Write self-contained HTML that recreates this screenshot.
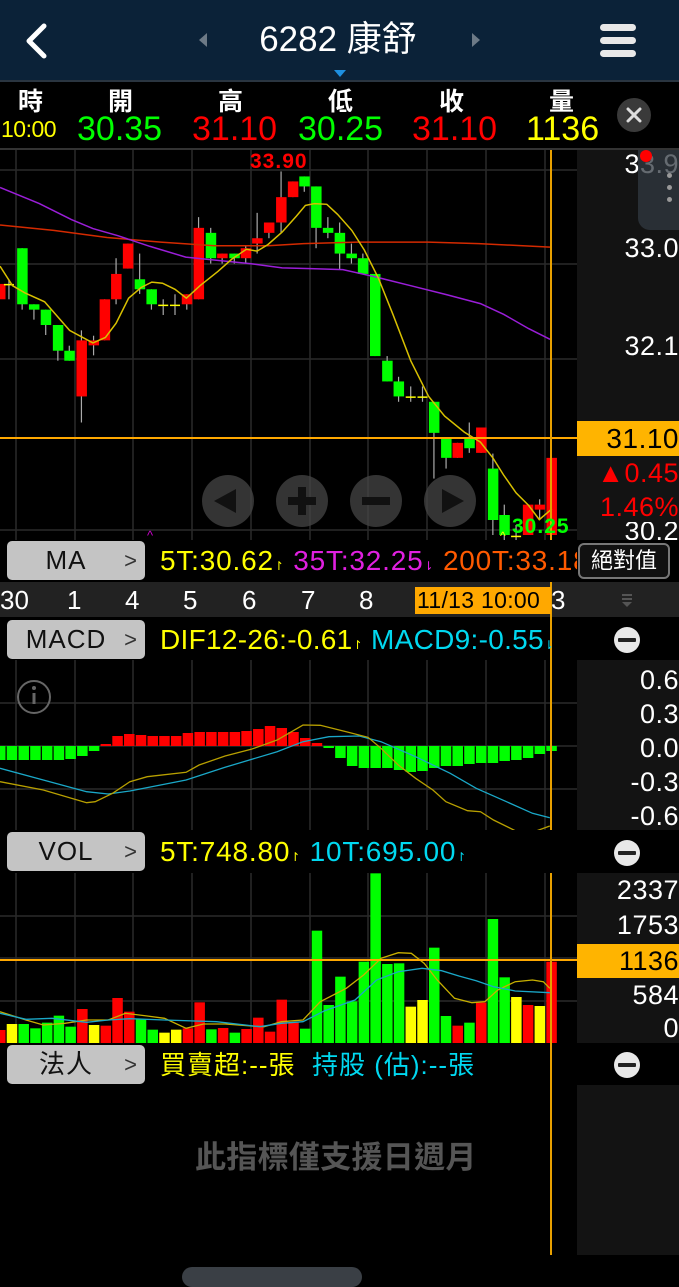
<!DOCTYPE html>
<html><head><meta charset="utf-8"><style>
*{margin:0;padding:0;box-sizing:border-box}
body{width:679px;height:1280px;background:#000;position:relative;overflow:hidden;font-family:"Liberation Sans","Noto Sans CJK TC",sans-serif;color:#fff}
.a{position:absolute;white-space:nowrap}
.btn{position:absolute;left:7px;width:138px;height:39px;background:#c4c4c4;border-radius:5px;color:#111;font-size:26px;line-height:39px}
.btn span{position:absolute;right:8px;top:0;color:#333;font-size:22px}
.btn b{font-weight:normal;position:absolute;left:0;width:118px;text-align:center;letter-spacing:1px}
.lbl{font-size:28px;line-height:30px;letter-spacing:0.8px}
.ax{font-size:27px;color:#fff;text-align:right;right:0px;letter-spacing:0.5px}
</style></head><body>
<div class="a" style="left:0;top:0;width:679px;height:80px;background:#0b2238"></div>
<svg class="a" style="left:0;top:0" width="679" height="80">
<path d="M44 26 L29 41 L44 56" stroke="#fff" stroke-width="5" fill="none" stroke-linecap="round" stroke-linejoin="round"/>
<path d="M207 33 L199 40 L207 47Z" fill="#6d7a86"/>
<path d="M472 33 L480 40 L472 47Z" fill="#6d7a86"/>
<rect x="600" y="24" width="36" height="7" rx="3.5" fill="#e8e8e8"/>
<rect x="600" y="37" width="36" height="7" rx="3.5" fill="#e8e8e8"/>
<rect x="600" y="50" width="36" height="7" rx="3.5" fill="#e8e8e8"/>
<path d="M334 70 L346 70 L340 77Z" fill="#1e90e0"/>
</svg>
<div class="a" style="left:218px;top:19px;width:240px;text-align:center;font-size:35px;line-height:42px">6282 康舒</div>
<div class="a" style="left:0;top:80px;width:679px;height:70px;border-top:2px solid #2a3540;border-bottom:2px solid #333"></div>
<div class="a" style="left:0;top:82px;width:679px;font-size:25px;font-weight:bold">
<span class="a" style="left:18px">時</span><span class="a" style="left:108px">開</span><span class="a" style="left:218px">高</span><span class="a" style="left:328px">低</span><span class="a" style="left:439px">收</span><span class="a" style="left:549px">量</span></div>
<div class="a" style="left:1px;top:116px;color:#ff0;font-size:23px;letter-spacing:-0.5px">10:00</div>
<div class="a" style="left:77px;top:110px;color:#0f0;font-size:34px">30.35</div>
<div class="a" style="left:192px;top:110px;color:#f00;font-size:34px">31.10</div>
<div class="a" style="left:298px;top:110px;color:#0f0;font-size:34px">30.25</div>
<div class="a" style="left:412px;top:110px;color:#f00;font-size:34px">31.10</div>
<div class="a" style="left:526px;top:110px;color:#ff0;font-size:34px">1136</div>
<svg class="a" style="left:616px;top:97px" width="36" height="36"><circle cx="18" cy="18" r="17" fill="#3a3a3a"/><path d="M12 12 L24 24 M24 12 L12 24" stroke="#ddd" stroke-width="3" stroke-linecap="round"/></svg>

<div class="a" style="left:577px;top:150px;width:102px;height:390px;background:#131313"></div>
<div class="a" style="left:577px;top:660px;width:102px;height:170px;background:#131313"></div>
<div class="a" style="left:577px;top:873px;width:102px;height:170px;background:#131313"></div>
<div class="a" style="left:577px;top:1085px;width:102px;height:170px;background:#131313"></div>
<div class="a" style="left:0;top:582px;width:679px;height:35px;background:#222"></div>

<svg id="ch" class="a" style="left:0;top:0" width="679" height="1280"></svg>

<div class="a ax" style="top:149px">33.9</div>
<div class="a" style="left:638px;top:150px;width:41px;height:80px;background:rgba(50,58,66,.75);border-radius:0 0 0 12px"></div>
<div class="a" style="left:640px;top:150px;width:12px;height:12px;border-radius:6px;background:#f00"></div>
<div class="a" style="left:667px;top:173px;width:5px;height:5px;border-radius:3px;background:#999"></div>
<div class="a" style="left:667px;top:185px;width:5px;height:5px;border-radius:3px;background:#999"></div>
<div class="a" style="left:667px;top:197px;width:5px;height:5px;border-radius:3px;background:#999"></div>
<div class="a ax" style="top:233px">33.0</div>
<div class="a ax" style="top:331px">32.1</div>
<div class="a" style="left:577px;top:421px;width:102px;height:35px;background:#ffb400;color:#000;font-size:28px;text-align:right;line-height:35px;letter-spacing:0.5px">31.10</div>
<div class="a" style="right:0px;top:458px;color:#f00;font-size:27px;letter-spacing:0.5px">▲0.45</div>
<div class="a" style="right:0px;top:492px;color:#f00;font-size:27px;letter-spacing:0.5px">1.46%</div>
<div class="a ax" style="top:522px;height:18px;overflow:hidden;line-height:18px">30.2</div>
<div class="a" style="left:250px;top:150px;color:#f00;font-size:21px;font-weight:bold;letter-spacing:1px">33.90</div>
<div class="a" style="left:512px;top:515px;color:#0f0;font-size:21px;font-weight:bold;letter-spacing:1px">30.25</div>

<div class="a" style="left:0;top:540px;width:679px;height:42px;background:#000"></div>
<div class="btn" style="top:541px"><b>MA</b><span>&gt;</span></div>
<div class="a lbl" style="left:160px;top:546px;width:417px;overflow:hidden"><span style="color:#ff0">5T:30.62<small style="font-size:12px">↾</small></span> <span style="color:#e020e0">35T:32.25<small style="font-size:12px">⇂</small></span> <span style="color:#ff5a00">200T:33.18</span></div>
<div class="a" style="left:578px;top:543px;width:92px;height:36px;border:2px solid #777;border-radius:6px;background:#111;font-size:22px;line-height:32px;text-align:center">絕對值</div>
<div class="a" style="left:415px;top:587px;width:136px;height:27px;background:#ffa800"></div>
<div class="a" style="left:0;top:582px;width:679px;font-size:26px;line-height:36px">
<span class="a" style="left:0">30</span><span class="a" style="left:67px">1</span><span class="a" style="left:125px">4</span><span class="a" style="left:183px">5</span><span class="a" style="left:242px">6</span><span class="a" style="left:301px">7</span><span class="a" style="left:359px">8</span><span class="a" style="left:417px;color:#000;font-size:23px;letter-spacing:0.3px">11/13 10:00</span><span class="a" style="left:551px">3</span></div>
<svg class="a" style="left:619px;top:592px" width="16" height="16"><rect x="3" y="2" width="10" height="2" fill="#555"/><rect x="3" y="6" width="10" height="2" fill="#555"/><path d="M3 10 L13 10 L8 15Z" fill="#555"/></svg>
<div class="btn" style="top:620px"><b>MACD</b><span>&gt;</span></div>
<div class="a lbl" style="left:160px;top:625px;width:417px;overflow:hidden;letter-spacing:0.3px"><span style="color:#ff0">DIF12-26:-0.61<small style="font-size:12px">↾</small></span> <span style="color:#00d8f0">MACD9:-0.55<small style="font-size:12px">⇂</small></span></div>
<div class="a ax" style="top:665px">0.6</div>
<div class="a ax" style="top:699px">0.3</div>
<div class="a ax" style="top:733px">0.0</div>
<div class="a ax" style="top:767px">-0.3</div>
<div class="a ax" style="top:801px">-0.6</div>
<div class="a" style="left:0;top:830px;width:577px;height:43px;background:#000"></div>
<div class="btn" style="top:832px"><b>VOL</b><span>&gt;</span></div>
<div class="a lbl" style="left:160px;top:837px"><span style="color:#ff0">5T:748.80<small style="font-size:12px">↾</small></span> <span style="color:#00d8f0">10T:695.00<small style="font-size:12px">↾</small></span></div>
<div class="a ax" style="top:875px">2337</div>
<div class="a ax" style="top:910px">1753</div>
<div class="a" style="left:577px;top:944px;width:102px;height:34px;background:#ffb400;color:#000;font-size:27px;text-align:right;line-height:34px;letter-spacing:0.5px">1136</div>
<div class="a ax" style="top:980px">584</div>
<div class="a ax" style="top:1013px">0</div>
<div class="btn" style="top:1045px"><b>法人</b><span>&gt;</span></div>
<div class="a lbl" style="left:160px;top:1050px;font-size:26px;letter-spacing:1px"><span style="color:#ff0">買賣超:--張</span>&nbsp; <span style="color:#00d8f0">持股 (估):--張</span></div>
<div class="a" style="left:195px;top:1132px;color:#555;font-size:31px;font-weight:bold;letter-spacing:0.3px">此指標僅支援日週月</div>
<div class="a" style="left:182px;top:1267px;width:180px;height:20px;border-radius:10px;background:#3a3f45"></div>

<script>
var s=document.getElementById('ch'),h='';
function L(x1,y1,x2,y2,c,w){h+='<line x1="'+x1+'" y1="'+y1+'" x2="'+x2+'" y2="'+y2+'" stroke="'+c+'" stroke-width="'+(w||1)+'"/>';}
function R(x,y,w,hh,c){h+='<rect x="'+x+'" y="'+y+'" width="'+w+'" height="'+hh+'" fill="'+c+'"/>';}
function P(pts,c,w,fx,fy,ox,oy){var a=[];for(var i=0;i<pts.length;i+=2)a.push((ox+pts[i]/fx).toFixed(1)+','+(oy+pts[i+1]/fy).toFixed(1));h+='<polyline points="'+a.join(' ')+'" fill="none" stroke="'+c+'" stroke-width="'+w+'"/>';}
var gx=[16,75,133,192,251,310,368,427,486,545];
[[150,540],[660,830],[873,1043]].forEach(function(r){gx.forEach(function(x){L(x,r[0],x,r[1],'#2a2a2a',1.5)});});
[170,264,359,530].forEach(function(y){L(0,y,577,y,'#2a2a2a',1.5)});
[703,746,789].forEach(function(y){L(0,y,577,y,'#2a2a2a',1.5)});
[916,958,1001].forEach(function(y){L(0,y,577,y,'#2a2a2a',1.5)});
var C=[[0,375,418,0,0,'r'],[25,377,377,362,418,'y'],[62,275,432,275,447,'g'],[95,432,447,432,475,'g'],[128,447,490,447,518,'g'],[162,490,562,490,590,'g'],[194,562,590,548,590,'g'],[228,533,690,505,763,'r'],[262,533,547,520,575,'r'],[293,418,533,418,533,'r'],[325,347,418,303,432,'r'],[358,262,332,262,332,'r'],[391,362,390,290,403,'g'],[424,390,432,390,447,'g'],[457,435,435,418,462,'y'],[490,435,435,404,462,'y'],[523,404,432,404,447,'r'],[556,218,418,188,418,'r'],[590,232,303,218,318,'g'],[622,290,303,290,318,'r'],[656,290,303,290,318,'g'],[688,275,303,270,318,'r'],[720,247,262,176,290,'r'],[753,203,232,203,247,'r'],[787,132,203,60,232,'r'],[820,88,132,88,132,'r'],[852,74,102,74,117,'g'],[885,102,218,102,275,'g'],[918,218,232,188,247,'g'],[951,232,290,203,333,'g'],[984,290,303,262,318,'g'],[1016,303,347,290,347,'g'],[1050,347,577,347,577,'g'],[1084,590,648,577,648,'g'],[1116,648,690,635,705,'g'],[1150,692,692,662,705,'y'],[1183,692,692,662,705,'y'],[1215,705,792,705,920,'g'],[1249,806,862,806,892,'g'],[1281,820,862,820,862,'r'],[1314,806,835,763,848,'g'],[1347,777,848,777,848,'r'],[1380,892,1036,850,1078,'g'],[1412,1022,1078,993,1092,'g'],[1445,1082,1082,1050,1092,'y'],[1478,993,1078,993,1078,'r'],[1511,993,1007,978,1036,'r'],[1544,862,1078,862,1078,'r']];
var col={r:'#f00',g:'#0f0',y:'#ff0'};
C.forEach(function(c){var x=c[0]/2.8,f=function(v){return 150+v/2.8};
 if(c[3])L(x,f(c[3]),x,f(c[4]),'#aaa',1.2);
 if(c[5]=='y')L(x-5,f(c[1]),x+5,f(c[1]),'#ff0',1.5);
 else R(x-5,f(c[1]),10.5,Math.max(2,f(c[2])-f(c[1])),col[c[5]]);});
P([0,210,150,225,300,245,450,258,600,268,750,268,850,262,1000,258,1200,258,1340,262,1540,272],'#d42a00',1.5,2.8,2.8,0,150);
P([0,105,110,150,200,195,260,220,330,240,420,270,520,300,620,310,700,318,790,330,870,332,960,335,1050,355,1150,380,1250,405,1345,430,1410,460,1480,500,1540,530],'#9a1ed8',1.5,2.8,2.8,0,150);
P([0,325,35,380,70,400,125,425,195,505,260,540,295,525,325,485,360,415,395,385,425,370,455,373,490,390,522,415,560,380,610,340,650,305,690,278,720,283,750,265,790,230,830,185,855,155,880,150,915,152,945,180,985,225,1020,280,1060,360,1100,460,1150,590,1200,690,1245,745,1300,790,1345,818,1380,862,1410,910,1445,960,1480,995,1510,1035,1545,1005],'#d8c000',1.5,2.8,2.8,0,150);
[228,302,376,450].forEach(function(x,i){h+='<circle cx="'+x+'" cy="501" r="26" fill="rgba(70,70,70,.75)"/>';});
h+='<path d="M214 501 L236 489 L236 513Z" fill="#111"/><rect x="288" y="497" width="28" height="8" fill="#111"/><rect x="298" y="487" width="8" height="28" fill="#111"/><rect x="362" y="497" width="28" height="8" fill="#111"/><path d="M464 501 L442 489 L442 513Z" fill="#111"/>';
h+='<text x="147" y="540" fill="#c0c" font-size="13">^</text><text x="500" y="540" fill="#ff0" font-size="12">^</text>';
var M=[-14,-14,-14,-14,-14,-14,-13,-10,-5,2,10,12,11,10,10,10,13,14,14,14,14,15,17,20,18,14,8,3,-2,-12,-20,-22,-22,-22,-24,-26,-25,-22,-20,-20,-18,-17,-17,-15,-14,-12,-8,-5];
M.forEach(function(v,i){var x=i*11.73-5;if(v>0)R(x,746-v,10.5,v,'#f00');else R(x,746,10.5,-v,'#0f0');});
P([0,325,100,360,200,395,250,402,300,393,430,360,520,322,640,275,700,245,760,230,830,228,880,245,960,290,1040,340,1100,385,1170,425,1230,460,1270,473],'#1aa8c8',1.3,2.31,3,0,660);
P([0,365,100,390,200,428,220,425,260,400,300,365,340,350,430,337,460,315,520,288,580,268,640,240,700,195,740,196,800,215,850,232,880,265,920,315,960,355,1000,390,1030,425,1080,452,1110,455,1140,480,1190,512,1240,512,1270,498],'#b8a000',1.3,2.31,3,0,660);
h+='<circle cx="34" cy="697" r="16" fill="none" stroke="#666" stroke-width="2"/><rect x="32.5" y="693" width="3" height="11" fill="#666"/><circle cx="34" cy="688" r="2" fill="#666"/>';
var V=[[510,'r'],[492,'y'],[492,'g'],[505,'g'],[488,'g'],[467,'g'],[500,'g'],[447,'r'],[495,'y'],[497,'r'],[414,'r'],[455,'r'],[477,'g'],[509,'g'],[518,'y'],[509,'y'],[505,'r'],[427,'r'],[508,'g'],[504,'r'],[518,'g'],[507,'r'],[473,'r'],[515,'r'],[419,'r'],[488,'r'],[506,'g'],[212,'g'],[435,'g'],[350,'g'],[424,'g'],[305,'g'],[40,'g'],[312,'g'],[310,'g'],[440,'y'],[420,'y'],[263,'g'],[468,'g'],[497,'r'],[488,'g'],[428,'r'],[177,'g'],[352,'g'],[411,'y'],[435,'r'],[438,'y'],[305,'r']];
V.forEach(function(v,i){var x=i*11.73-5,t=860+v[0]/3;R(x,t,10.5,1043-t,col[v[1]]);});
P([0,455,60,480,100,495,150,490,200,480,250,480,290,460,340,468,380,475,430,505,470,492,520,492,580,498,610,500,650,485,700,480,740,425,800,385,840,345,880,295,920,278,950,280,980,310,1010,360,1050,415,1090,428,1120,425,1150,390,1190,365,1230,360,1255,365,1270,385],'#c8b000',1.3,2.31,3,0,860);
P([0,460,60,478,120,475,200,487,250,480,300,476,380,480,500,485,600,500,650,490,700,485,750,452,820,420,870,360,920,335,975,325,1020,332,1060,348,1100,362,1140,380,1190,393,1270,398],'#1aa8c8',1.3,2.31,3,0,860);
L(0,438,577,438,'#ffa800',2);L(0,960,577,960,'#ffa800',2);L(551,150,551,1255,'#e8a000',2);
[640,853,1065].forEach(function(y){h+='<circle cx="627" cy="'+y+'" r="13" fill="#e8e8e8"/><rect x="618" y="'+(y-2)+'" width="18" height="4" rx="1" fill="#222"/>';});
s.innerHTML=h;
</script>
</body></html>
